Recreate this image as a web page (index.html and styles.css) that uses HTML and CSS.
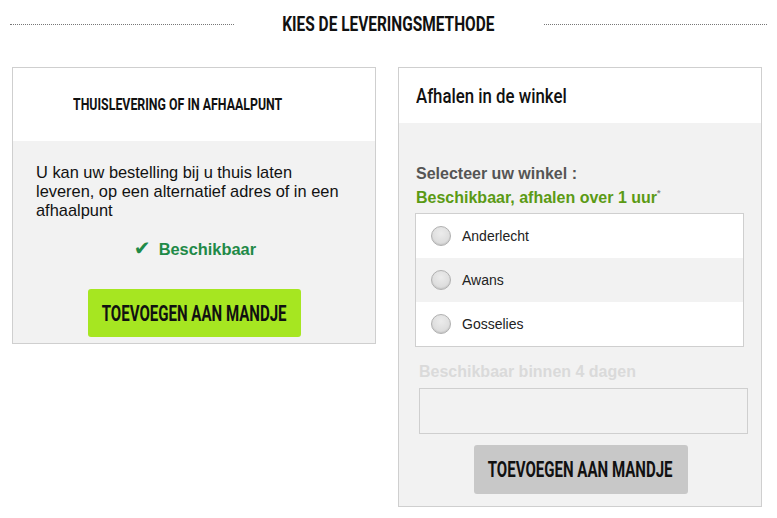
FILE: index.html
```html
<!DOCTYPE html>
<html>
<head>
<meta charset="utf-8">
<link rel="stylesheet" href="styles.css">
</head>
<body>
<div class="page">
  <div class="title-row">
    <span class="rule"></span>
    <h1 class="title"><span class="cond">KIES DE LEVERINGSMETHODE</span></h1>
    <span class="rule"></span>
  </div>
  <div class="cards">
    <div class="card card-home">
      <div class="card-head head-home"><h2 class="head-caps"><span class="cond cond-left">THUISLEVERING OF IN AFHAALPUNT</span></h2></div>
      <div class="card-body body-home">
        <p class="desc">U kan uw bestelling bij u thuis laten leveren, op een alternatief adres of in een afhaalpunt</p>
        <p class="avail"><span class="check">✔</span>Beschikbaar</p>
        <div class="btn-wrap"><button class="btn btn-green"><span class="cond">TOEVOEGEN AAN MANDJE</span></button></div>
      </div>
    </div>
    <div class="card card-store">
      <div class="card-head head-store"><h2 class="head-store-title"><span class="cond cond-left">Afhalen in de winkel</span></h2></div>
      <div class="card-body body-store">
        <p class="select-label">Selecteer uw winkel :</p>
        <p class="avail-hour">Beschikbaar, afhalen over 1 uur<sup>*</sup></p>
        <ul class="stores">
          <li class="store"><span class="radio"></span>Anderlecht</li>
          <li class="store store-alt"><span class="radio"></span>Awans</li>
          <li class="store"><span class="radio"></span>Gosselies</li>
        </ul>
        <p class="avail-days">Beschikbaar binnen 4 dagen</p>
        <div class="empty-box"></div>
        <div class="btn-wrap"><button class="btn btn-gray"><span class="cond">TOEVOEGEN AAN MANDJE</span></button></div>
      </div>
    </div>
  </div>
</div>
</body>
</html>
```

FILE: styles.css
```css
* { box-sizing: border-box; }
body {
  margin: 0;
  background: #fff;
  font-family: "Liberation Sans", Arial, sans-serif;
  color: #111;
}
.page {
  width: 777px;
  padding: 0 0 0 12px;
}
.cond {
  display: inline-block;
  white-space: nowrap;
  font-family: Roboto, "DejaVu Sans", sans-serif;
  transform-origin: center center;
}
.cond-left { transform-origin: left center; }
.title-row {
  display: flex;
  align-items: center;
  height: 48px;
  margin-left: -2px;
  padding-right: 10px;
}
.rule {
  flex: 1;
  height: 1px;
  border-top: 1px dotted #777;
  margin-top: 1px;
}
.title {
  width: 310px;
  flex: none;
  margin: 0;
  display: flex;
  justify-content: center;
  font-size: 21px;
  font-weight: 700;
  color: #111;
  line-height: 24px;
}
.title .cond { transform: scaleX(0.735); }
.cards {
  display: flex;
  align-items: flex-start;
  gap: 22px;
  margin-top: 19px;
}
.card {
  width: 364px;
  border: 1px solid #cfcfcf;
  background: #f2f2f2;
}
.card-head {
  background: #fff;
  display: flex;
  align-items: center;
}
.head-home {
  height: 73px;
  padding-left: 60px;
}
.head-caps {
  margin: 0;
  font-size: 17px;
  font-weight: 700;
  line-height: 20px;
}
.head-caps .cond { transform: scaleX(0.726); }
.body-home {
  padding: 22px 29px 6px 23px;
}
.desc {
  margin: 0;
  font-size: 16.4px;
  line-height: 19px;
  color: #111;
}
.avail {
  margin: 19px 0 0 0;
  text-align: center;
  font-size: 16.4px;
  line-height: 19px;
  font-weight: bold;
  color: #1f8a48;
  padding-left: 8px;
}
.check {
  font-family: "DejaVu Sans", sans-serif;
  font-size: 20px;
  line-height: 19px;
  margin-right: 8px;
}
.btn-wrap {
  display: flex;
  justify-content: center;
}
.body-home .btn-wrap { margin-top: 30px; padding-left: 6px; }
.btn {
  border: none;
  border-radius: 3px;
  height: 48px;
  display: flex;
  align-items: center;
  justify-content: center;
  font-size: 22px;
  font-weight: 700;
  color: #111;
  padding: 0;
  white-space: nowrap;
}
.btn .cond { transform: scaleX(0.684); }
.btn-green {
  width: 213px;
  background: #a6e621;
}
.btn-gray {
  width: 214px;
  height: 49px;
  background: #c8c8c8;
}
.head-store {
  height: 55px;
  padding-left: 17px;
}
.head-store-title {
  margin: 0;
  font-size: 21px;
  font-weight: 500;
  color: #111;
  line-height: 24px;
}
.head-store-title .cond { transform: scaleX(0.8); }
.body-store {
  padding: 41px 13px 12px 16px;
}
.select-label {
  margin: 0;
  font-size: 16px;
  font-weight: bold;
  color: #555;
  line-height: 19px;
  padding-left: 1px;
}
.avail-hour {
  margin: 5px 0 0 0;
  font-size: 16px;
  font-weight: bold;
  color: #5b9a14;
  line-height: 19px;
  padding-left: 1px;
}
.avail-hour sup {
  font-size: 9px;
  color: #888;
  vertical-align: 7px;
  line-height: 0;
}
.stores {
  list-style: none;
  margin: 6px 4px 0 0;
  padding: 0;
  background: #fff;
  border: 1px solid #cfcfcf;
}
.store {
  height: 44px;
  display: flex;
  align-items: center;
  padding-left: 15px;
  font-size: 14px;
  color: #222;
  background: #fff;
}
.store-alt { background: #f2f2f2; }
.radio {
  width: 20px;
  height: 20px;
  border-radius: 50%;
  border: 1px solid #b0b0b0;
  background: radial-gradient(circle at 50% 35%, #ececec 0%, #dedede 60%, #cfcfcf 100%);
  box-shadow: inset 0 -1px 1px rgba(0,0,0,0.08);
  margin-right: 11px;
  flex: none;
}
.avail-days {
  margin: 15px 0 0 4px;
  font-size: 16px;
  font-weight: bold;
  color: #dadada;
  line-height: 19px;
}
.empty-box {
  margin: 7px 0 0 4px;
  height: 46px;
  border: 1px solid #cfcfcf;
  background: #f2f2f2;
}
.body-store .btn-wrap { margin-top: 11px; padding-left: 0; padding-right: 2px; }
```
